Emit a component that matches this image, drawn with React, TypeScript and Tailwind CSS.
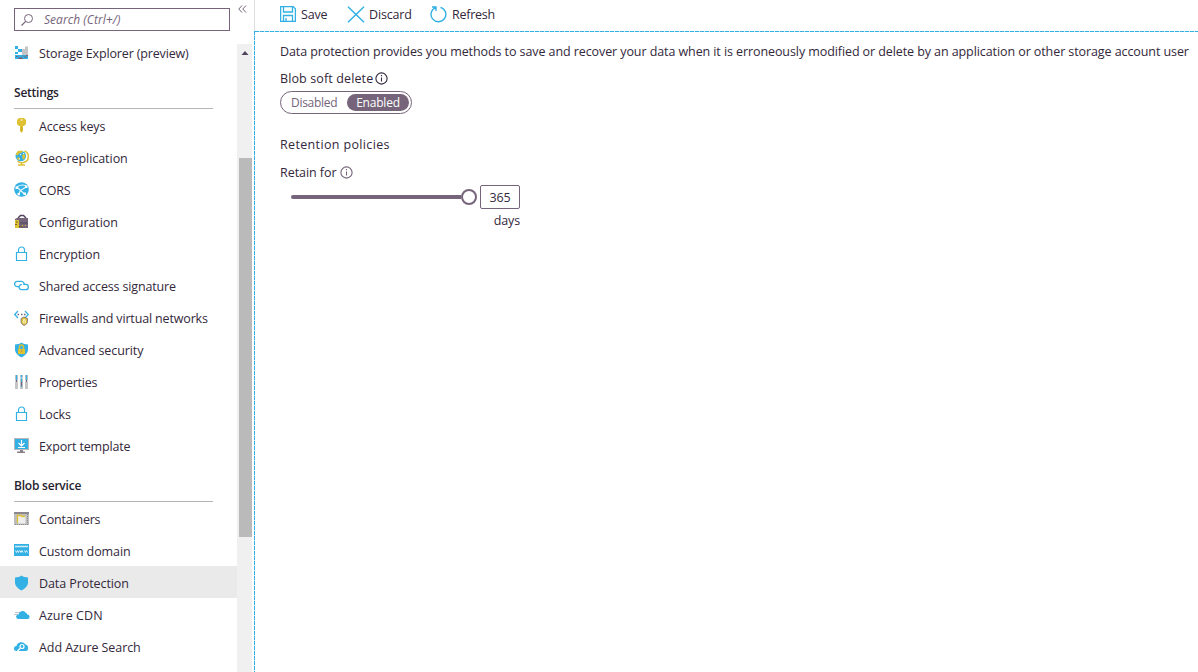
import type { ReactNode } from "react";

const BLUE = "#33b1e4";
const PLUM = "#75647a";
const GOLD = "#dfc233";

function Svg({ children, size = 16 }: { children: ReactNode; size?: number }) {
  return (
    <svg width={size} height={size} viewBox="0 0 16 16" fill="none" className="block shrink-0">
      {children}
    </svg>
  );
}

const LockIcon = () => (
  <Svg>
    <path d="M2.500 6.500h10v8h-10zM4.500 6.500V4a3 3 0 0 1 6 0v2.500" stroke={BLUE} strokeWidth="1.200" />
  </Svg>
);

const SHIELD = "M7.500 .5C5.500 2 3.500 2.400 1 2.500v5c0 3.500 3 6 6.500 8 3.500-2 6.500-4.500 6.500-8v-5C11.500 2.400 9.500 2 7.500 .5z";

const icons: Record<string, ReactNode> = {
  explorer: (
    <Svg>
      <path d="M1 1h3v3H1zM4 4h4v3H4zM1 7h3v2H1z" fill={BLUE} />
      <path d="M8 4h3v3H8zM11 1.500h3V7h-3zM8 7h6v3H8z" fill="#c4c4c4" />
      <path d="M1 10h13v4H1z" fill={BLUE} />
      <path d="M2 11.500h2M5.500 12.500h2M8 11h1M10 12h3M4 13.500h5M12 10.500h2" stroke={PLUM} />
    </Svg>
  ),
  key: (
    <Svg>
      <path d="M5 0h5l2 2v4L10 8H9v5l-1.500 2L6 13V8H5L3 6V2z" fill={GOLD} />
      <path d="M6.500 2h2" stroke="#fff" />
      <path d="M7.500 9v4" stroke="#b89c28" strokeWidth=".7" />
    </Svg>
  ),
  geo: (
    <Svg>
      <path d="M10.500 1a6 6 0 0 1-1 11.500C7 13 5 12.500 3.500 11M7.500 12.500V15M4 15h7" stroke={GOLD} strokeWidth="1.500" />
      <circle cx="6.800" cy="6" r="5.300" fill={BLUE} />
      <path d="M1.500 4.500 4 .8l5 0-1 2-3 .7-1 2zM8 5l3-1v4L9 10zM4 7l2 1-1 2-2-1z" fill={GOLD} />
      <path d="M6 4l1 1M9 3l1 1M5 9h1" stroke="#fff" />
    </Svg>
  ),
  cors: (
    <Svg>
      <circle cx="7.500" cy="7.500" r="7.300" fill={BLUE} />
      <path d="M2.500 5.500C5 3 9 2.500 12.500 4M3.500 5.500 6.500 8.500 12 5M6.500 8.500 10.500 12M6.500 8.500 4.500 12.500" stroke="#e5f5fb" strokeWidth="1.200" />
      <path d="M1.500 4.500H4V7H1.500zM11 3.500h2.500V6H11zM9.500 10.500H12V13H9.500zM3.500 11H6v2.200H3.500z" fill="#fff" />
    </Svg>
  ),
  config: (
    <Svg>
      <path d="M4.500 5V3.500l2-2h3l2 2V5" stroke="#51445c" strokeWidth="1.500" />
      <path d="M1 5l2-1h11v10H1z" fill={PLUM} />
      <path d="M1 6h4v8H1z" fill={GOLD} />
      <path d="M2 8h2M1 10.500h2M5 12.500h4" stroke="#75622b" />
      <path d="M6 9h8" stroke="#51445c" />
      <path d="M8 11.500h1M11 11.500h1" stroke={GOLD} />
    </Svg>
  ),
  lock: <LockIcon />,
  link: (
    <Svg>
      <path d="M5.500 8.700H3.300a2.500 2.500 0 0 1 0-5.400h4.200a2.600 2.600 0 0 1 2.300 3.700" stroke={BLUE} strokeWidth="1.300" />
      <path d="M9.500 6.300h2.200a2.600 2.600 0 0 1 0 5.400H7.500A2.600 2.600 0 0 1 5.300 8c.4-1 1.300-1.600 2.500-1.700" stroke={BLUE} strokeWidth="1.300" />
    </Svg>
  ),
  firewall: (
    <Svg>
      <path d="M4 1 .7 4.500 4 8M11 1l3.300 3.500L11 8" stroke={BLUE} strokeWidth="1.200" />
      <path d="M3.500 4.500H5M7 4.500h1.500M10 4.500h1.500" stroke={PLUM} strokeWidth="1.500" />
      <path d="M7 8.500l3-1.500 3.500 1.500v3c0 2-1.500 3-3.300 4C8.500 14.500 7 13.500 7 11.500z" fill={GOLD} stroke={PLUM} strokeWidth=".8" />
      <path d="M9 11h2.500v2H9zM9.500 11v-1.500h1.500V11" stroke="#fff" strokeWidth=".6" />
    </Svg>
  ),
  security: (
    <Svg>
      <path d={SHIELD} fill={BLUE} />
      <path d="M4 7h7v5H4z" fill={GOLD} />
      <path d="M5.500 7V5a2 2 0 0 1 4 0v2" stroke={GOLD} strokeWidth="1.400" />
      <path d="M7.500 8v2" stroke="#b19d42" />
    </Svg>
  ),
  properties: (
    <Svg>
      <path d="M2.500 1v14M7.500 1v14M12.500 1v14" stroke="#c5c5c5" strokeWidth="3" />
      <path d="M2.500 1v7M7.500 1v12M12.500 1v5" stroke={BLUE} strokeWidth="1.200" />
      <path d="M1 7h3M6 4h3M11 7h3" stroke="#fff" strokeWidth=".7" />
      <path d="M2.500 6v2M7.500 8v4M12.500 6v2" stroke={PLUM} />
    </Svg>
  ),
  exportTemplate: (
    <Svg>
      <path d="M0 0h15v12H0z" fill="#b8b8b8" />
      <path d="M1 1h13v10H1z" fill={BLUE} />
      <path d="M7.500 2v5M4.500 5l3 3 3-3M4 9.500h7" stroke="#fff" strokeWidth="1.200" />
      <path d="M6 12h3v1.500h2V15H3v-1.500h3z" fill="#88818a" />
    </Svg>
  ),
  containers: (
    <Svg>
      <path d="M0 1h15v2H0z" fill="#8d878f" />
      <path d="M0 3h15v11H0z" fill="#bdbdbd" />
      <path d="M3.500 5h8v7.500h-8z" fill="#eee" />
      <path d="M3.500 12V4.500H7l1 1h3" stroke={GOLD} strokeWidth="1.300" />
      <path d="M13.500 3v11M1 13.500h11" stroke="#8d878f" strokeDasharray="1 1" />
    </Svg>
  ),
  domain: (
    <Svg>
      <path d="M0 1h15v12H0z" fill={BLUE} />
      <path d="M1 3.500h13" stroke="#d4eef8" strokeWidth="1.500" />
      <path d="M1.500 7.500l1 2 1-2 1 2 1-2M6 7.500l1 2 1-2 1 2M10.500 7.500l1 2 1-2 1 2" stroke="#e8f6fb" strokeWidth=".9" />
    </Svg>
  ),
  shield: (
    <Svg>
      <path d={SHIELD} fill={BLUE} />
    </Svg>
  ),
  cdn: (
    <Svg>
      <path d="M1 5.500h5M0 7.500h4M2 9.500h4" stroke="#bcc2c7" strokeWidth="1.200" />
      <path d="M4.500 12a2.300 2.300 0 0 1 0-4.600 4 4 0 0 1 7-1.900 2.500 2.500 0 0 1 1.700 2.100 2.200 2.200 0 0 1 .3 4.400z" fill={BLUE} />
    </Svg>
  ),
  search: (
    <Svg>
      <path d="M2.500 12a2.500 2.500 0 0 1 0-5 5 5 0 0 1 9-1.500A3 3 0 0 1 14 8c.5 2-.3 4-2 4z" fill={BLUE} />
      <circle cx="8" cy="7.500" r="2" stroke="#fff" strokeWidth="1.200" />
      <path d="M6.500 9 3.500 12" stroke="#fff" strokeWidth="1.300" />
    </Svg>
  ),
};

type Item = { icon: string; label: string; spacing?: string; active?: boolean };

const settings: Item[] = [
  { icon: "key", label: "Access keys" },
  { icon: "geo", label: "Geo-replication", spacing: "tracking-[-0.05px]" },
  { icon: "cors", label: "CORS" },
  { icon: "config", label: "Configuration", spacing: "tracking-[-0.07px]" },
  { icon: "lock", label: "Encryption" },
  { icon: "link", label: "Shared access signature" },
  { icon: "firewall", label: "Firewalls and virtual networks" },
  { icon: "security", label: "Advanced security", spacing: "tracking-[-0.09px]" },
  { icon: "properties", label: "Properties", spacing: "tracking-[-0.23px]" },
  { icon: "lock", label: "Locks" },
  { icon: "exportTemplate", label: "Export template" },
];

const blob: Item[] = [
  { icon: "containers", label: "Containers", spacing: "tracking-[-0.2px]" },
  { icon: "domain", label: "Custom domain", spacing: "tracking-[-0.1px]" },
  { icon: "shield", label: "Data Protection", spacing: "tracking-[-0.08px]", active: true },
  { icon: "cdn", label: "Azure CDN", spacing: "tracking-[0.05px]" },
  { icon: "search", label: "Add Azure Search", spacing: "tracking-[-0.07px]" },
];

function Row({ icon, label, spacing = "", active }: Item) {
  return (
    <a className={`flex h-8 items-center gap-[9px] pt-1 pl-3.5 ${active ? "bg-[#eaeaea]" : ""}`}>
      <span className="pb-0.5">{icons[icon]}</span>
      <span className={`whitespace-nowrap ${spacing}`}>{label}</span>
    </a>
  );
}

function Heading({ children }: { children: ReactNode }) {
  return (
    <div className="h-[41px] pl-3.5">
      <h2 className="h-[41px] w-[199px] border-b border-[#b5b5b5] pt-4 text-[12px] leading-[18px] font-semibold tracking-[-0.22px] text-[#261d2e]">{children}</h2>
    </div>
  );
}

function Info({ color }: { color: string }) {
  return (
    <svg width="13" height="13" viewBox="0 0 13 13" fill="none" className="mb-0.5 block">
      <circle cx="6.500" cy="6.500" r="5.600" stroke={color} strokeWidth="1.100" />
      <path d="M6.500 5.500v4M6.500 3v1.200" stroke={color} strokeWidth="1.100" />
    </svg>
  );
}

export default function App() {
  return (
    <div className="flex h-[672px] w-[1198px] overflow-hidden bg-white font-['Open_Sans',sans-serif] text-[12.5px] leading-5 tracking-[-0.15px] text-[#33283b]">
      <aside className="flex w-[254px] shrink-0">
        <nav className="w-[237px]">
          <div className="pt-2 pl-3.5">
            <div className="flex h-[23px] w-[216px] items-center gap-[11px] border border-[#75647a] pl-1.5 text-[12px] text-[#75647a] italic">
              <svg width="12" height="12" viewBox="0 0 12 12" fill="none">
                <circle cx="7.500" cy="4.500" r="4" stroke={PLUM} />
                <path d="M4.700 7.300.5 11.500" stroke={PLUM} strokeWidth="1.200" />
              </svg>
              <span className="pt-px tracking-[0.05px]">Search (Ctrl+/)</span>
            </div>
          </div>
          <div className="mt-[5px]">
            <Row icon="explorer" label="Storage Explorer (preview)" />
          </div>
          <Heading>Settings</Heading>
          {settings.map((item) => (
            <Row key={item.label} {...item} />
          ))}
          <Heading>Blob service</Heading>
          {blob.map((item) => (
            <Row key={item.label} {...item} />
          ))}
        </nav>
        <div className="flex w-[17px] flex-col">
          <div className="h-11 pt-[5px] pl-px">
            <svg width="9" height="9" viewBox="0 0 9 9" fill="none">
              <path d="M4 .5.8 4 4 7.500M8 .5 4.800 4 8 7.500" stroke={PLUM} />
            </svg>
          </div>
          <div className="flex w-[15px] flex-1 flex-col items-end bg-[#f0f0f0]">
            <svg width="15" height="17" viewBox="0 0 15 17" className="mb-[97px] block">
              <path d="M4.500 11 8 7l3.500 4z" fill="#51445c" />
            </svg>
            <div className="h-[379px] w-[13px] bg-[#bababa]" />
          </div>
        </div>
      </aside>
      <div className="flex w-px shrink-0 flex-col">
        <div className="h-[31px] bg-[#dedede]" />
        <div className="flex-1 bg-[repeating-linear-gradient(to_bottom,#33b1e4_0px,#33b1e4_4px,#d5e8ef_4px,#d5e8ef_5px)]" />
      </div>
      <main className="min-w-0 flex-1">
        <div className="flex h-[31px] items-center pb-[3px] pl-[25px]">
          <button className="flex w-[67px] items-center gap-[5px]">
            <svg width="16" height="16" viewBox="0 0 16 16" fill="none">
              <path d="M.600.600h12.500l2.300 2.300v12.500H.600z" stroke={BLUE} strokeWidth="1.300" />
              <path d="M3.500.5v5.500h9V.5M3.500 15.500v-6h9v6M6 12v3.500" stroke={BLUE} strokeWidth="1.300" />
            </svg>
            <span className="pt-0.5">Save</span>
          </button>
          <button className="flex w-[83px] items-center gap-1">
            <svg width="18" height="17" viewBox="0 0 18 17" fill="none">
              <path d="M1 .7 17 16.300M17 .7 1 16.300" stroke={BLUE} strokeWidth="1.500" />
            </svg>
            <span className="pt-0.5">Discard</span>
          </button>
          <button className="flex items-center gap-[5px]">
            <svg width="17" height="17" viewBox="0 0 17 17" fill="none">
              <path d="M10.500 1.300a7.400 7.400 0 1 1-5 .3M2 1h4v4" stroke={BLUE} strokeWidth="1.400" />
            </svg>
            <span className="pt-0.5 tracking-[-0.25px]">Refresh</span>
          </button>
        </div>
        <div className="h-px bg-[repeating-linear-gradient(to_right,#33b1e4_0px,#33b1e4_4px,#d5e8ef_4px,#d5e8ef_5px)]" />
        <div className="pt-2.5 pl-[25px]">
          <p className="tracking-[-0.086px] whitespace-nowrap">
            Data protection provides you methods to save and recover your data when it is erroneously modified or delete by an application or other storage account user
          </p>
          <div className="mt-[7px] flex h-5 items-center gap-0.5">
            <span className="font-medium tracking-[0.12px]">Blob soft delete</span>
            <Info color="#33283b" />
          </div>
          <div className="mt-0.5 flex h-[23px] w-[132px] items-center rounded-full border border-[#75647a] pl-2.5 text-[12px] text-[#75647a]">
            <span className="w-14 pt-px tracking-[-0.3px]">Disabled</span>
            <span className="flex h-[17px] w-[62px] items-center justify-center rounded-full bg-[#75647a] pt-px tracking-[-0.2px] text-white">Enabled</span>
          </div>
          <p className="mt-[21px] tracking-[0.35px]">Retention policies</p>
          <div className="mt-2 flex h-5 items-center gap-[3px]">
            <span className="font-medium tracking-[-0.05px]">Retain for</span>
            <Info color={PLUM} />
          </div>
          <div className="mt-px flex h-[26px] items-center pl-[11px]">
            <div className="h-1 w-[170px] rounded-l-full bg-[#75647a]" />
            <div className="size-4 rounded-full border-2 border-[#75647a] bg-white" />
            <div className="ml-[3px] flex h-6 w-10 items-center justify-center rounded-[2px] border border-[#75647a] pt-0.5">365</div>
          </div>
          <div className="mt-px w-60 text-right font-medium">days</div>
        </div>
      </main>
    </div>
  );
}
